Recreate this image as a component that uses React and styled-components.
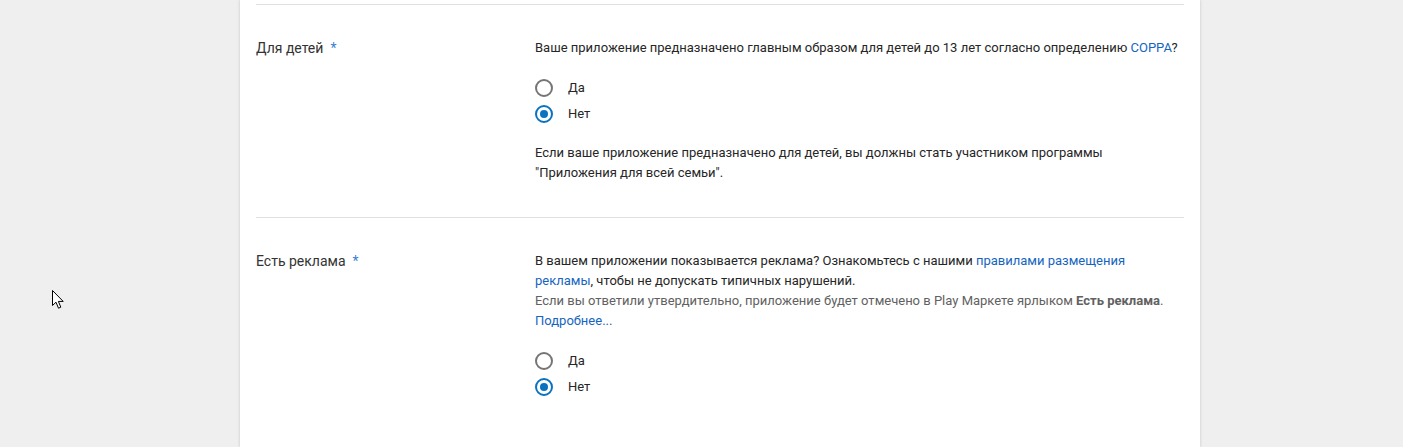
import React from "react";
import styled, { createGlobalStyle } from "styled-components";

const GlobalStyle = createGlobalStyle`
  html, body {
    margin: 0;
    padding: 0;
    background: #efefef;
    font-family: Roboto, "Noto Sans", Arial, sans-serif;
    -webkit-font-smoothing: antialiased;
  }
`;

const Page = styled.div`
  position: relative;
  height: 447px;
  overflow: hidden;
  display: flex;
  padding-left: 240px;
`;

const Card = styled.div`
  width: 928px;
  padding: 4px 16px 0;
  background: #fff;
  box-shadow: 0 0 3px rgba(0, 0, 0, 0.18);
`;

const Section = styled.div`
  border-top: 1px solid #e0e0e0;
  padding: 33px 0 34px;
  display: flex;
`;

const Label = styled.div`
  width: 279px;
  flex: none;
  font-size: 14px;
  line-height: 20px;
  color: #333;
`;

const Required = styled.span`
  color: #3c7fd0;
  margin-left: 7px;
`;

const Content = styled.div`
  flex: 1;
  font-size: 13px;
  line-height: 20px;
  color: #262626;
`;

const Muted = styled.div`
  color: #616161;
`;

const Link = styled.a`
  color: #1565c0;
  text-decoration: none;
`;

const Group = styled.div`
  display: flex;
  flex-direction: column;
  margin: 17px 0 16px;
`;

const Option = styled.label`
  display: flex;
  align-items: center;
  height: 26px;
  font-size: 13px;
  color: #262626;
  gap: 15px;
`;

const Radio = styled.span`
  width: 18px;
  height: 18px;
  box-sizing: border-box;
  border-radius: 50%;
  border: 2px solid ${(p) => (p.$checked ? "#0a73c0" : "#757575")};
  display: flex;
  align-items: center;
  justify-content: center;

  &::after {
    content: "";
    width: 8px;
    height: 8px;
    border-radius: 50%;
    background: #0a73c0;
    display: ${(p) => (p.$checked ? "block" : "none")};
  }
`;

const Cursor = styled.svg`
  position: absolute;
  left: 52px;
  top: 290px;
`;

const Choice = ({ checked }) => (
  <Group>
    <Option>
      <Radio $checked={checked === "yes"} />
      Да
    </Option>
    <Option>
      <Radio $checked={checked === "no"} />
      Нет
    </Option>
  </Group>
);

export default function App() {
  return (
    <Page>
      <GlobalStyle />
      <Card>
        <Section>
          <Label>
            Для детей<Required>*</Required>
          </Label>
          <Content>
            Ваше приложение предназначено главным образом для детей до 13 лет
            согласно определению <Link href="#">COPPA</Link>?
            <Choice checked="no" />
            Если ваше приложение предназначено для детей, вы должны стать
            участником программы
            <br />
            "Приложения для всей семьи".
          </Content>
        </Section>
        <Section>
          <Label>
            Есть реклама<Required>*</Required>
          </Label>
          <Content>
            В вашем приложении показывается реклама? Ознакомьтесь с нашими{" "}
            <Link href="#">правилами размещения</Link>
            <br />
            <Link href="#">рекламы</Link>, чтобы не допускать типичных
            нарушений.
            <Muted>
              Если вы ответили утвердительно, приложение будет отмечено в Play
              Маркете ярлыком <b>Есть реклама</b>.
            </Muted>
            <Link href="#">Подробнее...</Link>
            <Choice checked="no" />
          </Content>
        </Section>
      </Card>
      <Cursor width="13" height="20" viewBox="0 0 13 20">
        <path
          d="M0.5 0.5 L0.5 15.5 L4 12.2 L6.5 18.2 L8.8 17.2 L6.4 11.4 L11.2 11.4 Z"
          fill="#fff"
          stroke="#000"
          strokeWidth="1"
          strokeLinejoin="miter"
        />
      </Cursor>
    </Page>
  );
}
